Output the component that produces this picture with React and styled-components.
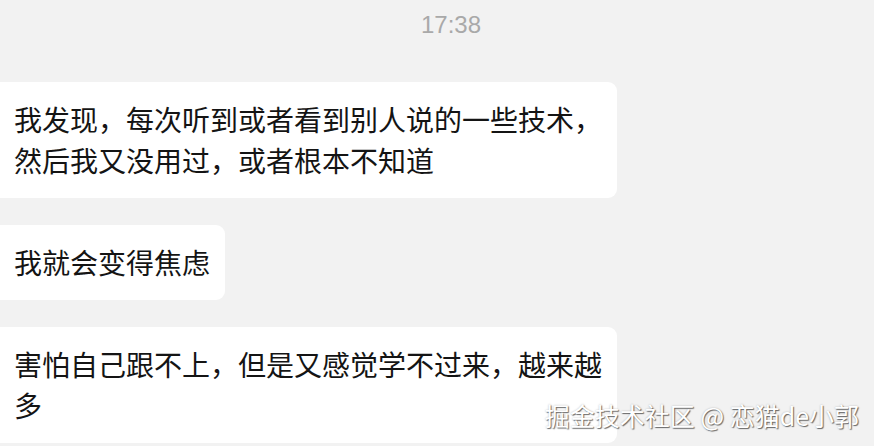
import React from 'react'
import styled, { createGlobalStyle } from 'styled-components'

const GlobalStyle = createGlobalStyle`
  html, body {
    margin: 0;
    padding: 0;
    background: #f2f2f2;
  }
  * {
    box-sizing: border-box;
  }
`

const Screen = styled.div`
  position: relative;
  width: 874px;
  height: 446px;
  overflow: hidden;
  background: #f2f2f2;
  font-family: 'Noto Sans CJK SC', 'Noto Sans', sans-serif;
`
const TimeStamp = styled.div`
  padding: 10px 0 0 28px;
  height: 82px;
  text-align: center;
  font-family: 'Liberation Sans', Arial, sans-serif;
  font-size: 24px;
  line-height: 30px;
  color: #a9a9a9;
`
const MessageList = styled.div`
  display: flex;
  flex-direction: column;
  align-items: flex-start;
  gap: 27px;
`
const Bubble = styled.div`
  max-width: 617px;
  padding: 17px 15px 17px 14px;
  background: #ffffff;
  border-radius: 0 9px 9px 0;
  color: #141414;
  font-size: 28px;
  line-height: 41px;
  word-break: break-all;
`
const Watermark = styled.div`
  position: absolute;
  right: 15px;
  bottom: 16px;
  font-family: 'Noto Sans CJK SC', 'Liberation Sans', sans-serif;
  font-size: 25px;
  line-height: 29px;
  color: #ffffff;
  text-shadow: 1px 1px 1px rgba(0, 0, 0, 0.55), 0 0 2px rgba(0, 0, 0, 0.25);
  white-space: nowrap;
`

const messages = [
  '我发现，每次听到或者看到别人说的一些技术，然后我又没用过，或者根本不知道',
  '我就会变得焦虑',
  '害怕自己跟不上，但是又感觉学不过来，越来越多',
]

export default function App() {
  return (
    <>
      <GlobalStyle />
      <Screen>
        <TimeStamp>17:38</TimeStamp>
        <MessageList>
          {messages.map((text) => (
            <Bubble key={text}>{text}</Bubble>
          ))}
        </MessageList>
        <Watermark>掘金技术社区 @ 恋猫de小郭</Watermark>
      </Screen>
    </>
  )
}
